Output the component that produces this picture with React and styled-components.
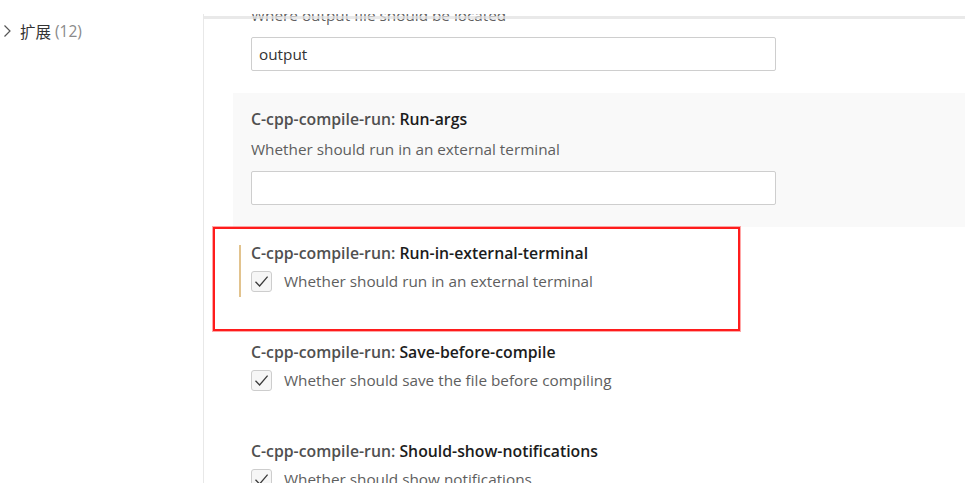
import React from 'react';
import styled, { createGlobalStyle } from 'styled-components';

const GlobalStyle = createGlobalStyle`
  html, body {
    margin: 0;
    padding: 0;
    background: #fff;
  }
  body {
    font-family: "Open Sans", "Noto Sans CJK SC", sans-serif;
    color: #333;
  }
`;

const Page = styled.div`
  position: relative;
  display: flex;
  width: 965px;
  height: 483px;
  overflow: hidden;
`;

const Sidebar = styled.div`
  width: 203px;
  flex: none;
  padding-top: 20px;
`;

const TocRow = styled.div`
  display: flex;
  align-items: center;
  height: 22px;
  padding-left: 2px;
  font-size: 15.5px;
  color: #333;
  cursor: pointer;
  svg {
    flex: none;
    margin-right: 8px;
  }
`;

const Count = styled.span`
  color: #8a8a8a;
  margin-left: 4px;
`;

const Editor = styled.div`
  flex: 1;
  margin-top: 14px;
  border-left: 1px solid #e8e8e8;
  overflow: hidden;
  position: relative;
  &::before {
    content: '';
    position: absolute;
    left: 0;
    right: 0;
    top: 2px;
    height: 3px;
    background: rgba(225, 225, 225, 0.75);
    z-index: 2;
  }
`;

const List = styled.div`
  margin-top: ${p => -p.$scroll}px;
  padding-left: 29px;
`;

const Item = styled.div`
  padding: 18px 0 ${p => (p.$kind === 'text' ? 22 : 29)}px 6px;
  background: ${p => (p.$hover ? '#f9f9f9' : 'transparent')};
`;

const Contents = styled.div`
  border-left: 2px solid ${p => (p.$modified ? '#e2c38e' : 'transparent')};
  padding: 0 0 ${p => (p.$kind === 'text' ? 0 : 5)}px 10px;
`;

const Title = styled.div`
  font-size: 15.8px;
  line-height: 17px;
  padding-bottom: 1px;
  font-weight: 600;
  white-space: nowrap;
`;

const Category = styled.span`
  color: #505050;
`;

const Key = styled.span`
  color: #1c1c1c;
`;

const Description = styled.div`
  margin-top: 10px;
  font-size: 15.3px;
  line-height: 20px;
  color: #5e5e5e;
`;

const TextInput = styled.input`
  display: block;
  box-sizing: border-box;
  margin-top: 12px;
  width: 525px;
  height: 34px;
  padding: 0 7px;
  border: 1px solid #cecece;
  border-radius: 2px;
  background: #fff;
  font-family: inherit;
  font-size: 15.3px;
  color: #333;
  outline: none;
`;

const CheckRow = styled.div`
  display: flex;
  align-items: center;
  margin-top: 7px;
  height: 22px;
  font-size: 15.3px;
  color: #5e5e5e;
`;

const CheckBox = styled.span`
  box-sizing: border-box;
  width: 21px;
  height: 21px;
  margin-right: 12px;
  border: 1px solid #cdcdcd;
  border-radius: 3px;
  background: #f6f6f6;
  display: flex;
  align-items: center;
  justify-content: center;
`;

const Annotation = styled.div`
  position: absolute;
  left: 213px;
  top: 227px;
  width: 527px;
  height: 104px;
  box-sizing: border-box;
  border: 2px solid #ff1c1c;
  box-shadow: 0 0 0 1px rgba(255, 60, 60, 0.45);
  pointer-events: none;
`;

const Chevron = () => (
  <svg width="10" height="14" viewBox="0 0 10 14">
    <path d="M2.5 1.5 L8 7 L2.5 12.5" fill="none" stroke="#555" strokeWidth="1.2" />
  </svg>
);

const Check = () => (
  <svg width="17" height="17" viewBox="0 0 17 17">
    <path d="M2.5 8.8 L6.6 13 L14.6 3.6" fill="none" stroke="#3a3a3a" strokeWidth="1.3" />
  </svg>
);

const settings = [
  { kind: 'text', name: 'Output-location', desc: 'Where output file should be located', value: 'output' },
  { kind: 'text', name: 'Run-args', desc: 'Whether should run in an external terminal', value: '', hover: true },
  { kind: 'bool', name: 'Run-in-external-terminal', desc: 'Whether should run in an external terminal', modified: true },
  { kind: 'bool', name: 'Save-before-compile', desc: 'Whether should save the file before compiling' },
  { kind: 'bool', name: 'Should-show-notifications', desc: 'Whether should show notifications' },
];

const Setting = ({ s }) => (
  <Item $kind={s.kind} $hover={s.hover}>
    <Contents $kind={s.kind} $modified={s.modified}>
      <Title>
        <Category>C-cpp-compile-run: </Category>
        <Key>{s.name}</Key>
      </Title>
      {s.kind === 'text' ? (
        <>
          <Description>{s.desc}</Description>
          <TextInput defaultValue={s.value} />
        </>
      ) : (
        <CheckRow>
          <CheckBox><Check /></CheckBox>
          {s.desc}
        </CheckRow>
      )}
    </Contents>
  </Item>
);

export default function App() {
  return (
    <>
      <GlobalStyle />
      <Page>
        <Sidebar>
          <TocRow>
            <Chevron />
            扩展<Count>(12)</Count>
          </TocRow>
        </Sidebar>
        <Editor>
          <List $scroll={55}>
            {settings.map(s => <Setting key={s.name} s={s} />)}
          </List>
        </Editor>
        <Annotation />
      </Page>
    </>
  );
}
